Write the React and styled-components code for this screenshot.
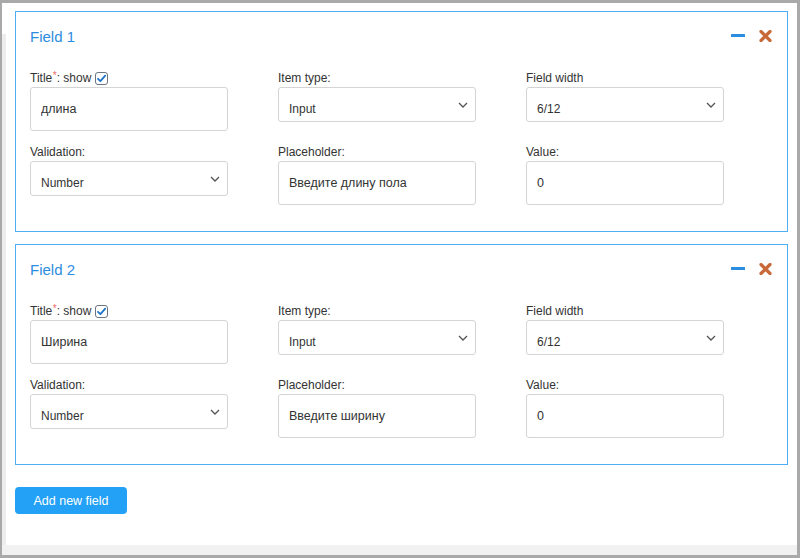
import React from 'react';
import styled, { createGlobalStyle } from 'styled-components';

const Global = createGlobalStyle`
  html, body { margin: 0; padding: 0; background: #fff; }
  body { font-family: "Liberation Sans", Arial, sans-serif; color: #333; }
  *, *::before, *::after { box-sizing: border-box; }
`;

const Frame = styled.div`
  width: 800px;
  height: 558px;
  border: 2px solid #a9a9a9;
  border-top-width: 3px;
  border-right-width: 3px;
  border-bottom-width: 3px;
  display: grid;
  grid-template-rows: 1fr 10px;
  background: #fff;
  overflow: hidden;
`;

const Body = styled.div`
  display: flex;
  min-height: 0;
`;

const Gutter = styled.div`
  width: 4px;
  margin-top: 31px;
  background: #ededed;
`;

const Main = styled.div`
  flex: 1;
  padding: 8px 9px 0 9px;
  display: flex;
  flex-direction: column;
  gap: 12px;
`;

const BottomBar = styled.div`
  background: #f1f1f1;
`;

const Card = styled.section`
  border: 1px solid #4fadf3;
  padding: 15px 15px 26px 14px;
  background: #fff;
`;

const CardHeader = styled.div`
  display: flex;
  justify-content: space-between;
  align-items: center;
  height: 20px;
`;

const CardTitle = styled.h3`
  margin: 0;
  font-size: 15px;
  line-height: 20px;
  font-weight: normal;
  color: #2b8de0;
`;

const Tools = styled.div`
  display: flex;
  align-items: center;
  gap: 14px;
  margin-top: -3px;
`;

const IconButton = styled.span`
  display: inline-flex;
  cursor: pointer;
`;

const Grid = styled.div`
  margin-top: 23px;
  display: grid;
  grid-template-columns: repeat(3, 198px);
  column-gap: 50px;
  row-gap: 13px;
  align-items: start;
`;

const Field = styled.div`
  display: flex;
  flex-direction: column;
`;

const Label = styled.label`
  display: block;
  font-size: 12px;
  line-height: 17px;
  height: 17px;
  color: #333;
  white-space: nowrap;
`;

const Req = styled.span`
  color: #ec6a6a;
  font-size: 10px;
  vertical-align: 3px;
  line-height: 1;
  margin-left: 0.5px;
`;

const CheckWrap = styled.span`
  display: inline-block;
  margin-left: 4px;
  vertical-align: -3px;
  line-height: 0;
`;

const TextInput = styled.input`
  height: 44px;
  width: 100%;
  border: 1px solid #d4d4d4;
  border-radius: 3px;
  padding: 0 10px;
  font-family: "Liberation Sans", Arial, sans-serif;
  font-size: 12.5px;
  color: #333;
  background: #fff;
  outline: none;
`;

const SelectBox = styled.div`
  height: 35px;
  border: 1px solid #d4d4d4;
  border-radius: 3px;
  padding: 0 7px 0 10px;
  display: flex;
  justify-content: space-between;
  align-items: flex-start;
  background: #fff;
  cursor: pointer;
`;

const SelectValue = styled.span`
  display: block;
  margin-top: 14px;
  font-size: 12px;
  line-height: 14px;
  color: #333;
`;

const Chevron = styled.svg`
  align-self: center;
  margin-top: 1px;
`;

const AddButton = styled.button`
  margin-top: 10px;
  align-self: flex-start;
  width: 112px;
  height: 27px;
  border: none;
  border-radius: 4px;
  background: #22a1f6;
  color: #fff;
  font-family: "Liberation Sans", Arial, sans-serif;
  font-size: 12.5px;
  padding: 0;
  cursor: pointer;
`;

const MinusIcon = () => (
  <svg width="14" height="3" viewBox="0 0 14 3">
    <rect x="0" y="0" width="14" height="3" rx="0.5" fill="#2b8de0" />
  </svg>
);

const CloseIcon = () => (
  <svg width="13" height="12" viewBox="0 0 13 12">
    <path d="M2 1.5 L11 10.5 M11 1.5 L2 10.5" stroke="#c8693a" strokeWidth="3.2" strokeLinecap="round" />
  </svg>
);

const CheckIcon = () => (
  <svg width="13" height="13" viewBox="0 0 13 13">
    <rect x="0.5" y="0.5" width="12" height="12" rx="2.5" fill="#fff" stroke="#6b7480" />
    <path d="M3 6.8 L5.4 9.2 L10.2 3.6" fill="none" stroke="#1f74c9" strokeWidth="1.8" strokeLinecap="round" strokeLinejoin="round" />
  </svg>
);

const Select = ({ value }) => (
  <SelectBox>
    <SelectValue>{value}</SelectValue>
    <Chevron width="10" height="6" viewBox="0 0 10 6">
      <path d="M1 1 L5 5 L9 1" fill="none" stroke="#555" strokeWidth="1.3" />
    </Chevron>
  </SelectBox>
);

const fields = [
  { id: 1, title: 'длина', placeholder: 'Введите длину пола' },
  { id: 2, title: 'Ширина', placeholder: 'Введите ширину' },
];

const FieldCard = ({ field }) => (
  <Card>
    <CardHeader>
      <CardTitle>Field {field.id}</CardTitle>
      <Tools>
        <IconButton><MinusIcon /></IconButton>
        <IconButton><CloseIcon /></IconButton>
      </Tools>
    </CardHeader>
    <Grid>
      <Field>
        <Label>
          Title<Req>*</Req>: show
          <CheckWrap><CheckIcon /></CheckWrap>
        </Label>
        <TextInput readOnly defaultValue={field.title} />
      </Field>
      <Field>
        <Label>Item type:</Label>
        <Select value="Input" />
      </Field>
      <Field>
        <Label>Field width</Label>
        <Select value="6/12" />
      </Field>
      <Field>
        <Label>Validation:</Label>
        <Select value="Number" />
      </Field>
      <Field>
        <Label>Placeholder:</Label>
        <TextInput readOnly defaultValue={field.placeholder} />
      </Field>
      <Field>
        <Label>Value:</Label>
        <TextInput readOnly defaultValue="0" />
      </Field>
    </Grid>
  </Card>
);

export default function App() {
  return (
    <>
      <Global />
      <Frame>
        <Body>
          <Gutter />
          <Main>
            {fields.map((f) => (
              <FieldCard key={f.id} field={f} />
            ))}
            <AddButton>Add new field</AddButton>
          </Main>
        </Body>
        <BottomBar />
      </Frame>
    </>
  );
}
